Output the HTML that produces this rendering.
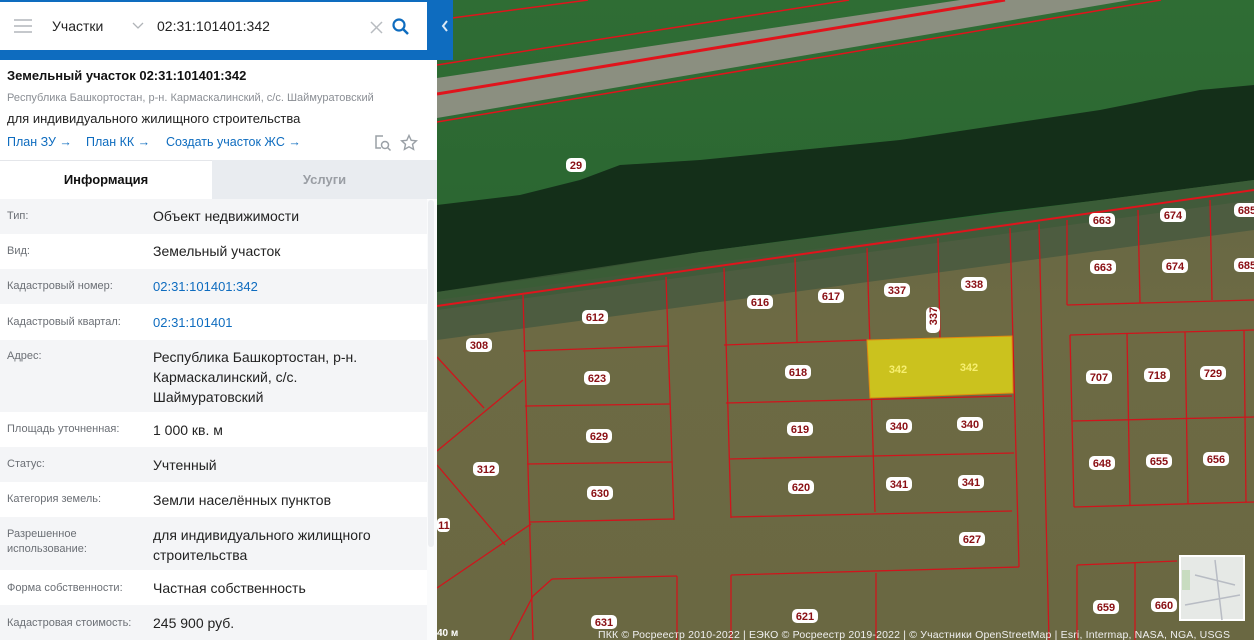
<!DOCTYPE html>
<html><head><meta charset="utf-8"><style>
*{margin:0;padding:0;box-sizing:border-box}
body{width:1254px;height:640px;overflow:hidden;position:relative;font-family:"Liberation Sans","DejaVu Sans",sans-serif;background:#5c6040}
#map{position:absolute;left:0;top:0}
#hdr{position:absolute;left:0;top:0;width:453px;height:60px;background:#0e6cbf}
#inp{position:absolute;left:0;top:2px;width:427px;height:48px;background:#fff}
#panel{position:absolute;left:0;top:60px;width:437px;height:580px;background:#fff}
.t{position:absolute;white-space:nowrap}
.row{position:absolute;left:0;width:427px}
.g{background:#f4f5f7}
.lab{position:absolute;left:7px;font-size:11px;color:#6b6f75;line-height:15px}
.val{position:absolute;left:153px;font-size:14px;color:#222;line-height:20px}
.blue{color:#0e6cbf}
</style></head><body>
<svg id="map" width="1254" height="640" viewBox="0 0 1254 640">
<defs>
<linearGradient id="fld" x1="0" y1="0" x2="0" y2="1">
<stop offset="0" stop-color="#5d6446"/><stop offset="0.5" stop-color="#6d6a44"/><stop offset="1" stop-color="#6a6842"/>
</linearGradient>
<linearGradient id="grn" x1="0" y1="0" x2="0" y2="1">
<stop offset="0" stop-color="#2f6d34"/><stop offset="1" stop-color="#2a6431"/>
</linearGradient>
</defs>
<rect x="437" y="0" width="817" height="640" fill="url(#fld)"/>
<polygon points="437,0 1254,0 1254,230 437,340" fill="#4d5c40"/>
<polygon points="437,0 1254,0 1254,190 437,300" fill="url(#grn)"/>
<polygon points="437,78 437,118 1130,0 960,0" fill="#8b8f80"/>
<polygon points="437,205 520,195 580,180 620,165 700,160 800,150 900,140 1000,125 1100,110 1200,90 1254,85 1254,180 1100,200 1000,212 850,232 700,252 560,275 437,292" fill="#142f19"/>
<polygon points="437,292 700,252 1254,180 1254,200 700,275 437,310" fill="#3e5a38" opacity="0.8"/>
<g stroke="#e0141c" fill="none">
<line x1="437" y1="94" x2="1005" y2="0" stroke-width="3"/>
<line x1="437" y1="65" x2="849" y2="0" stroke-width="1.5"/>
<line x1="437" y1="20" x2="588" y2="0" stroke-width="1.5"/>
<line x1="437" y1="122" x2="1161" y2="0" stroke-width="1.5"/>
<line x1="437" y1="306" x2="1254" y2="190" stroke-width="2"/>
</g>
<g stroke="#d0141c" stroke-width="1.3" fill="none">
<line x1="523" y1="295" x2="533" y2="640"/>
<line x1="666" y1="277" x2="674" y2="520"/>
<line x1="724" y1="268" x2="731" y2="518"/>
<line x1="795" y1="258" x2="797" y2="342"/>
<line x1="867" y1="248" x2="875" y2="512"/>
<line x1="938" y1="238" x2="940" y2="338"/>
<line x1="1010" y1="228" x2="1019" y2="567"/>
<line x1="1039" y1="224" x2="1049" y2="640"/>
<line x1="1067" y1="220" x2="1067" y2="305"/>
<line x1="1138" y1="210" x2="1140" y2="303"/>
<line x1="1210" y1="200" x2="1212" y2="300"/>
<line x1="1067" y1="305" x2="1254" y2="300"/>
<line x1="523" y1="351" x2="668" y2="346"/>
<line x1="525" y1="406" x2="670" y2="404"/>
<line x1="527" y1="464" x2="672" y2="462"/>
<line x1="530" y1="522" x2="674" y2="519"/>
<line x1="724" y1="345" x2="867" y2="340"/>
<line x1="726" y1="403" x2="1012" y2="396"/>
<line x1="729" y1="459" x2="1014" y2="453"/>
<line x1="731" y1="517" x2="1012" y2="511"/>
<line x1="731" y1="575" x2="1019" y2="567"/>
<line x1="731" y1="575" x2="731" y2="640"/>
<line x1="876" y1="573" x2="876" y2="640"/>
<line x1="552" y1="579" x2="677" y2="576"/>
<line x1="677" y1="576" x2="677" y2="640"/>
<line x1="437" y1="357" x2="484" y2="408"/>
<line x1="437" y1="451" x2="523" y2="380"/>
<line x1="437" y1="465" x2="505" y2="545"/>
<line x1="437" y1="588" x2="531" y2="524"/>
<line x1="533" y1="596" x2="552" y2="579"/>
<line x1="510" y1="640" x2="533" y2="596"/>
<line x1="1070" y1="335" x2="1074" y2="507"/>
<line x1="1127" y1="333" x2="1130" y2="506"/>
<line x1="1185" y1="332" x2="1188" y2="504"/>
<line x1="1244" y1="330" x2="1246" y2="502"/>
<line x1="1070" y1="335" x2="1254" y2="330"/>
<line x1="1072" y1="421" x2="1254" y2="417"/>
<line x1="1074" y1="507" x2="1254" y2="502"/>
<line x1="1077" y1="565" x2="1177" y2="561"/>
<line x1="1077" y1="565" x2="1077" y2="640"/>
<line x1="1135" y1="562" x2="1135" y2="640"/>
</g>
<polygon points="867,340 1012,336 1013,393 870,398" fill="#cbc21e" stroke="#e08a10" stroke-width="1"/>
<g font-family="Liberation Sans Narrow,Liberation Sans,sans-serif" font-size="11" font-weight="bold" text-anchor="middle">
<g fill="#fff">
<rect x="566" y="158" width="20" height="14" rx="5"/><rect x="582" y="310" width="26" height="14" rx="5"/><rect x="747" y="295" width="26" height="14" rx="5"/><rect x="818" y="289" width="26" height="14" rx="5"/><rect x="884" y="283" width="26" height="14" rx="5"/><rect x="961" y="277" width="26" height="14" rx="5"/><rect x="1089" y="213" width="26" height="14" rx="5"/><rect x="1160" y="208" width="26" height="14" rx="5"/><rect x="1234" y="203" width="26" height="14" rx="5"/><rect x="1090" y="260" width="26" height="14" rx="5"/><rect x="1162" y="259" width="26" height="14" rx="5"/><rect x="1234" y="258" width="26" height="14" rx="5"/><rect x="466" y="338" width="26" height="14" rx="5"/><rect x="584" y="371" width="26" height="14" rx="5"/><rect x="785" y="365" width="26" height="14" rx="5"/><rect x="1086" y="370" width="26" height="14" rx="5"/><rect x="1144" y="368" width="26" height="14" rx="5"/><rect x="1200" y="366" width="26" height="14" rx="5"/><rect x="586" y="429" width="26" height="14" rx="5"/><rect x="787" y="422" width="26" height="14" rx="5"/><rect x="886" y="419" width="26" height="14" rx="5"/><rect x="957" y="417" width="26" height="14" rx="5"/><rect x="1089" y="456" width="26" height="14" rx="5"/><rect x="1146" y="454" width="26" height="14" rx="5"/><rect x="1203" y="452" width="26" height="14" rx="5"/><rect x="473" y="462" width="26" height="14" rx="5"/><rect x="587" y="486" width="26" height="14" rx="5"/><rect x="788" y="480" width="26" height="14" rx="5"/><rect x="886" y="477" width="26" height="14" rx="5"/><rect x="958" y="475" width="26" height="14" rx="5"/><rect x="959" y="532" width="26" height="14" rx="5"/><rect x="437" y="518" width="13" height="14" rx="4"/><rect x="1093" y="600" width="26" height="14" rx="5"/><rect x="1151" y="598" width="26" height="14" rx="5"/><rect x="591" y="615" width="26" height="14" rx="5"/><rect x="792" y="609" width="26" height="14" rx="5"/><rect x="926" y="307" width="14" height="26" rx="5"/>
</g>
<g fill="#8a0f14">
<text x="576" y="169">29</text><text x="595" y="321">612</text><text x="760" y="306">616</text><text x="831" y="300">617</text><text x="897" y="294">337</text><text x="974" y="288">338</text><text x="1102" y="224">663</text><text x="1173" y="219">674</text><text x="1247" y="214">685</text><text x="1103" y="271">663</text><text x="1175" y="270">674</text><text x="1247" y="269">685</text><text x="479" y="349">308</text><text x="597" y="382">623</text><text x="798" y="376">618</text><text x="1099" y="381">707</text><text x="1157" y="379">718</text><text x="1213" y="377">729</text><text x="599" y="440">629</text><text x="800" y="433">619</text><text x="899" y="430">340</text><text x="970" y="428">340</text><text x="1102" y="467">648</text><text x="1159" y="465">655</text><text x="1216" y="463">656</text><text x="486" y="473">312</text><text x="600" y="497">630</text><text x="801" y="491">620</text><text x="899" y="488">341</text><text x="971" y="486">341</text><text x="972" y="543">627</text><text x="444" y="529">11</text><text x="1106" y="611">659</text><text x="1164" y="609">660</text><text x="604" y="626">631</text><text x="805" y="620">621</text>
<text x="937" y="324" transform="rotate(-90 933 320)">337</text>
</g>
<g fill="#f7ef70"><text x="898" y="373">342</text><text x="969" y="371">342</text></g>
</g>
<rect x="1180" y="556" width="64" height="64" fill="#e6e9e6" stroke="#fff" stroke-width="2"/>
<path d="M1185 605 L1240 595 M1215 560 L1222 620 M1195 575 L1235 585" stroke="#b8bcc4" stroke-width="1.5" fill="none"/>
<rect x="1182" y="570" width="8" height="20" fill="#c8dcc0"/>
<text x="437" y="636" font-size="10" font-weight="bold" fill="#fff" font-family="Liberation Sans">40 м</text>
<text x="598" y="638" font-size="10.5" fill="#f0f0f0" font-family="Liberation Sans Narrow,Liberation Sans,sans-serif" textLength="632">ПКК © Росреестр 2010-2022 | ЕЭКО © Росреестр 2019-2022 | © Участники OpenStreetMap | Esri, Intermap, NASA, NGA, USGS</text>
</svg>

<div id="hdr"></div>
<div id="inp">
<svg class="t" style="left:14px;top:17px" width="18" height="14"><path d="M0 1h18M0 7h18M0 13h18" stroke="#c5c8cc" stroke-width="2"/></svg>
<div class="t" style="left:52px;top:16px;font-size:14px;color:#222">Участки</div>
<svg class="t" style="left:132px;top:20px" width="12" height="8"><path d="M1 1l5 5 5-5" stroke="#b0b4b8" stroke-width="1.3" fill="none"/></svg>
<div class="t" style="left:157px;top:16px;font-size:14px;color:#222">02:31:101401:342</div>
<svg class="t" style="left:370px;top:19px" width="13" height="13"><path d="M1 1l11 11M12 1L1 12" stroke="#b8bcc0" stroke-width="1.5"/></svg>
<svg class="t" style="left:392px;top:16px" width="18" height="18"><circle cx="7" cy="7" r="5.5" stroke="#0e6cbf" stroke-width="2.2" fill="none"/><path d="M11 11l5 5" stroke="#0e6cbf" stroke-width="2.5"/></svg>
</div>
<svg class="t" style="left:440px;top:19px" width="10" height="14"><path d="M7 2L3 7l4 5" stroke="#fff" stroke-width="2" fill="none" opacity="0.85"/></svg>

<div id="panel">
<div class="t" style="left:7px;top:8px;font-size:13px;font-weight:bold;color:#111">Земельный участок 02:31:101401:342</div>
<div class="t" style="left:7px;top:32px;font-size:11px;color:#8a8e94">Республика Башкортостан, р-н. Кармаскалинский, с/с. Шаймуратовский</div>
<div class="t" style="left:7px;top:51px;font-size:13px;color:#222">для индивидуального жилищного строительства</div>
<div class="t blue" style="left:7px;top:75px;font-size:12.5px">План ЗУ →</div>
<div class="t blue" style="left:86px;top:75px;font-size:12.5px">План КК →</div>
<div class="t blue" style="left:166px;top:75px;font-size:12.5px">Создать участок ЖС →</div>
<svg class="t" style="left:374px;top:74px" width="18" height="18"><path d="M9 2H2v12h5" stroke="#9aa0a6" stroke-width="1.5" fill="none"/><circle cx="11" cy="11" r="3.5" stroke="#9aa0a6" stroke-width="1.5" fill="none"/><path d="M13.5 13.5l3 3" stroke="#9aa0a6" stroke-width="1.5"/></svg>
<svg class="t" style="left:400px;top:74px" width="18" height="18"><path d="M9 1.5l2.2 4.8 5.2.5-3.9 3.5 1.1 5.1L9 12.8l-4.6 2.6 1.1-5.1L1.6 6.8l5.2-.5z" stroke="#9aa0a6" stroke-width="1.4" fill="none"/></svg>
<div class="t" style="left:0;top:100px;width:437px;height:1px;background:#e4e6ea"></div>
<div class="t" style="left:212px;top:100px;width:225px;height:39px;background:#e9ecf0"></div>
<div class="t" style="left:0;top:112px;width:212px;text-align:center;font-size:13px;font-weight:bold;color:#111">Информация</div>
<div class="t" style="left:212px;top:112px;width:225px;text-align:center;font-size:13px;font-weight:bold;color:#9a9ea4">Услуги</div>

<div class="row g" style="top:139px;height:35px"><div class="lab" style="top:10px">Тип:</div><div class="val" style="top:7px">Объект недвижимости</div></div>
<div class="row" style="top:174px;height:35px"><div class="lab" style="top:10px">Вид:</div><div class="val" style="top:7px">Земельный участок</div></div>
<div class="row g" style="top:209px;height:35px"><div class="lab" style="top:10px">Кадастровый номер:</div><div class="val blue" style="top:8px;font-size:13px">02:31:101401:342</div></div>
<div class="row" style="top:244px;height:36px"><div class="lab" style="top:11px">Кадастровый квартал:</div><div class="val blue" style="top:9px;font-size:13px">02:31:101401</div></div>
<div class="row g" style="top:280px;height:72px"><div class="lab" style="top:9px">Адрес:</div><div class="val" style="top:7px">Республика Башкортостан, р-н.<br>Кармаскалинский, с/с.<br>Шаймуратовский</div></div>
<div class="row" style="top:352px;height:35px"><div class="lab" style="top:10px">Площадь уточненная:</div><div class="val" style="top:8px">1 000 кв. м</div></div>
<div class="row g" style="top:387px;height:35px"><div class="lab" style="top:10px">Статус:</div><div class="val" style="top:8px">Учтенный</div></div>
<div class="row" style="top:422px;height:35px"><div class="lab" style="top:10px">Категория земель:</div><div class="val" style="top:8px">Земли населённых пунктов</div></div>
<div class="row g" style="top:457px;height:53px"><div class="lab" style="top:10px">Разрешенное<br>использование:</div><div class="val" style="top:8px">для индивидуального жилищного<br>строительства</div></div>
<div class="row" style="top:510px;height:35px"><div class="lab" style="top:11px">Форма собственности:</div><div class="val" style="top:8px">Частная собственность</div></div>
<div class="row g" style="top:545px;height:35px"><div class="lab" style="top:11px">Кадастровая стоимость:</div><div class="val" style="top:8px">245 900 руб.</div></div>
<div class="t" style="left:427px;top:140px;width:10px;height:440px;background:#fafbfc"></div>
<div class="t" style="left:428px;top:140px;width:6px;height:347px;background:#eceef1;border-radius:3px"></div>
</div>
</body></html>
